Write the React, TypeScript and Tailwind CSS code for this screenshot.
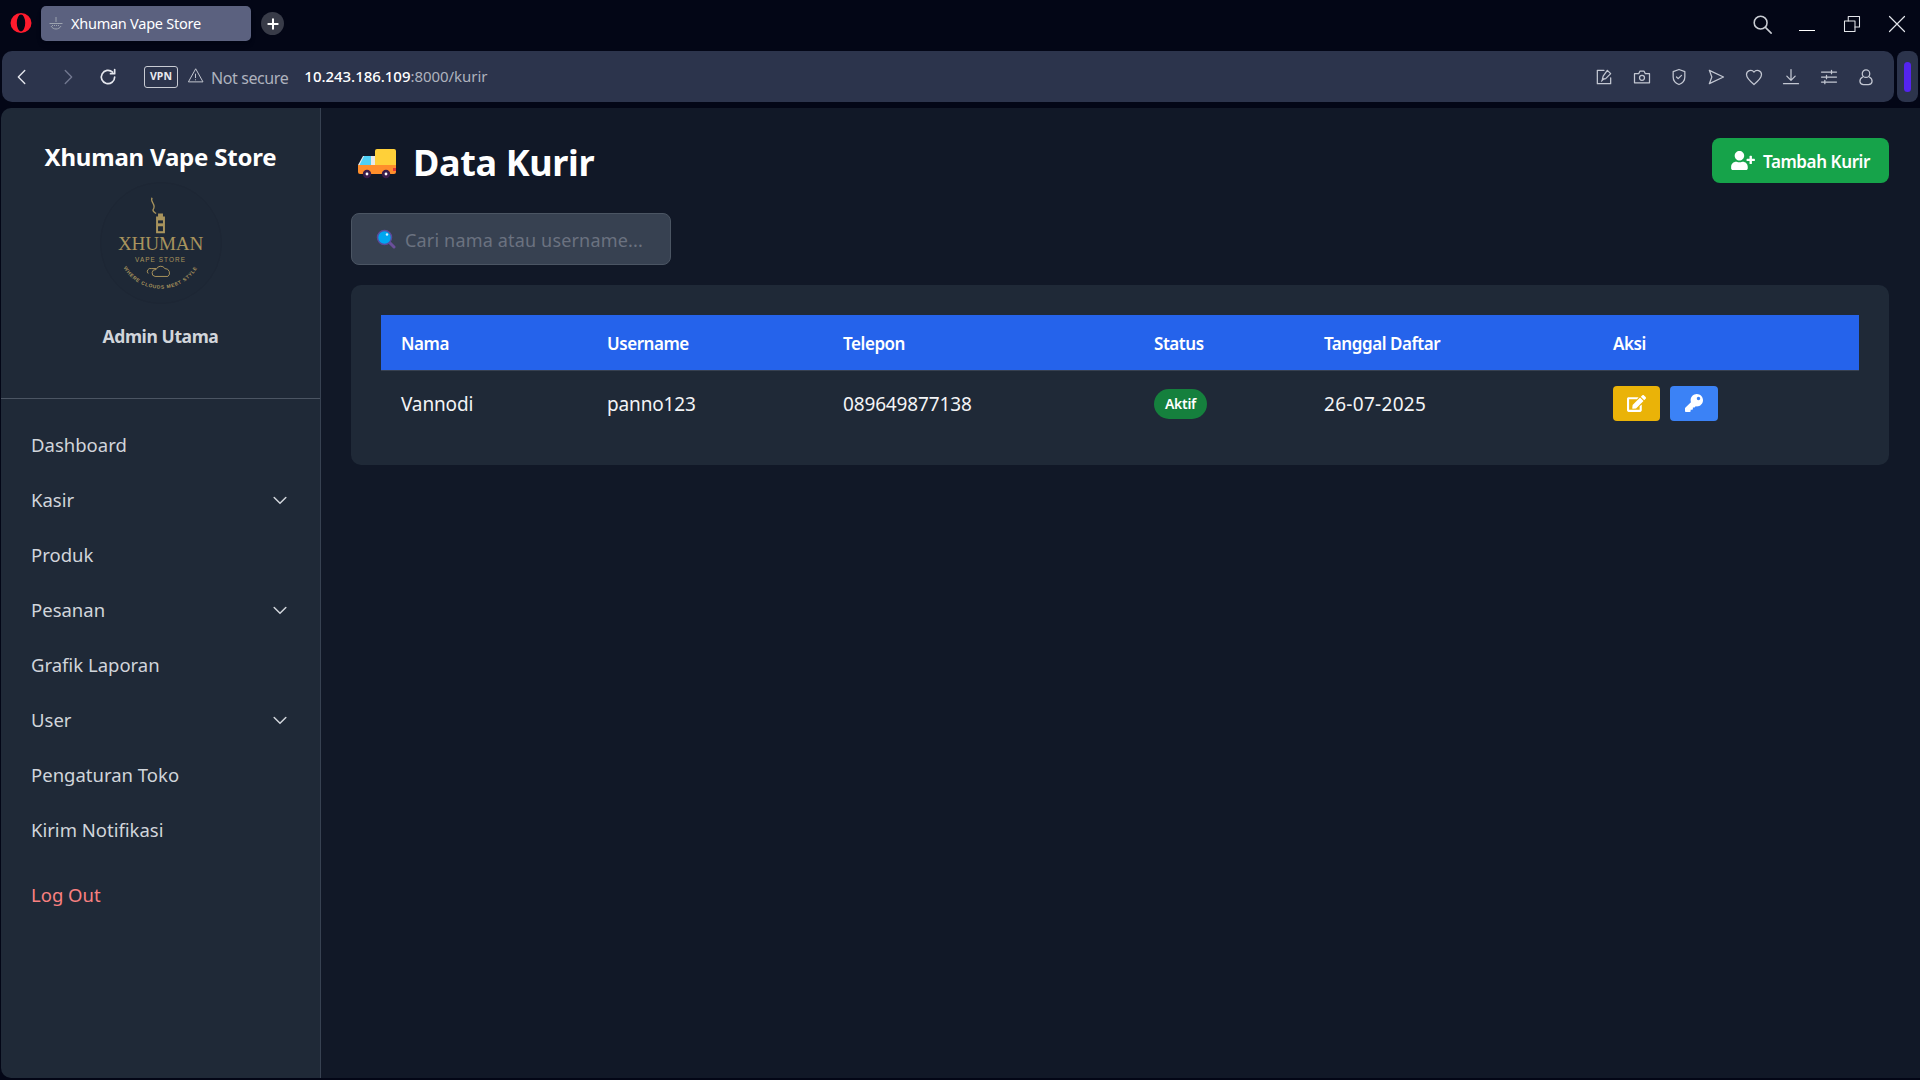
import { FaEdit, FaKey, FaUserPlus } from "react-icons/fa";

const ui = { fontFamily: '"Noto Sans", "Open Sans", sans-serif' };

function Stroke({ children, className = "w-5 h-5", vb = "0 0 24 24", sw = 1.5 }: { children: React.ReactNode; className?: string; vb?: string; sw?: number }) {
  return (
    <svg viewBox={vb} className={className} fill="none" stroke="currentColor" strokeWidth={sw} strokeLinecap="round" strokeLinejoin="round">
      {children}
    </svg>
  );
}

function Opera() {
  return (
    <svg viewBox="0 0 22 22" className="w-[22px] h-[22px]">
      <path
        fillRule="evenodd"
        fill="#ff1b2d"
        d="M11 1a10.500 10 0 1 0 0 20 10.500 10 0 1 0 0-20zM11 2.500a4.200 8.500 0 1 1 0 17 4.200 8.500 0 1 1 0-17z"
      />
    </svg>
  );
}

function TabIcon() {
  return (
    <svg viewBox="0 0 16 16" className="w-[16px] h-[16px]" stroke="#9ca3af" fill="none" strokeWidth="1">
      <path d="M8 1v5M1.500 7.500h13" />
      <path d="M3 10c2 4 8 4 10 0" />
      <path d="M4 9.500h8" strokeDasharray="1 1" />
    </svg>
  );
}

function Toolbar() {
  const cls = "w-[20px] h-[20px]";
  return (
    <div className="flex items-center gap-[17.4px] text-[#c3c7d2] pr-[18px]">
      <Stroke className={cls}><path d="M12 4H4v16h16v-7" /><path d="M16 4l4 4-6 6-4 1 1-4z" /><path d="M9 17l3-3" /></Stroke>
      <Stroke className={cls}><path d="M3 8h5l1.500-3h5L16 8h5v11H3z" /><circle cx="12" cy="13" r="3" /></Stroke>
      <Stroke className={cls}><path d="M12 3l7 2.500V12c0 4.500-3 7.500-7 9-4-1.500-7-4.500-7-9V5.500z" /><path d="M9 12l2 2 4-4" /></Stroke>
      <Stroke className={cls}><path d="M4 4l17 8-17 8 3-8z" /></Stroke>
      <Stroke className={cls}><path d="M12 21C6 16 3 13 3 9a5 5 0 0 1 9-3 5 5 0 0 1 9 3c0 4-3 7-9 12z" /></Stroke>
      <Stroke className={cls}><path d="M12 3v12M7 11l5 5 5-5M3 20h18" /></Stroke>
      <Stroke className={cls}><path d="M3 6h18M3 12h18M3 18h18" /><path d="M15 4v4M9 10v4M7 16v4" /></Stroke>
      <Stroke className={cls}><circle cx="12" cy="8" r="4.500" /><path d="M8 12c-5 3-4 9 1 9h6c5 0 6-6 1-9" /></Stroke>
    </div>
  );
}

function TopChrome() {
  return (
    <div className="bg-[#030616] h-[108px] shrink-0 flex flex-col">
      <div className="h-[51px] flex items-start">
        <div className="w-[41px] h-[44px] mt-[1px] flex items-center justify-center pl-[1px]"><Opera /></div>
        <div className="mt-[6px] w-[210px] h-[35px] rounded-[5px] bg-[#5b617f] flex items-center pl-[7px] gap-[5px] text-white text-[14.5px] tracking-[-0.25px] shadow-md">
          <TabIcon />
          <span className="ml-[2px]">Xhuman Vape Store</span>
        </div>
        <div className="ml-[10px] mt-[12px] w-[23px] h-[23px] rounded-full bg-[#383b48] flex items-center justify-center text-white">
          <Stroke className="w-[14px] h-[14px]" sw={3.500}><path d="M12 4v16M4 12h16" /></Stroke>
        </div>
        <div className="flex-1" />
        <div className="flex items-center h-[48px] text-[#e3e5ea]">
          <Stroke className="w-[22px] h-[22px] text-[#c9ccd3]" sw={1.700}><circle cx="10.500" cy="10.500" r="7" /><path d="M16 16l6 6" /></Stroke>
          <div className="w-[16px] h-[1px] bg-white ml-[26px] mt-[13px]" />
          <Stroke className="w-[18px] h-[18px] ml-[28px]" sw={1.400}><rect x="2" y="8" width="14" height="14" /><path d="M7 8V2h15v14h-6" /></Stroke>
          <Stroke className="w-[18px] h-[18px] ml-[27px] mr-[14px]" sw={1.600}><path d="M2 2l20 20M22 2L2 22" /></Stroke>
        </div>
      </div>
      <div className="flex h-[51px] pl-[2px] pr-[2px] gap-[3px]">
        <div className="flex-1 rounded-[10px] bg-[#2c344c] flex items-center justify-between">
          <div className="flex items-center text-white">
            <Stroke className="w-[22px] h-[22px] ml-[9px] text-[#e5e7ee]"><path d="M15 5l-7 7 7 7" /></Stroke>
            <Stroke className="w-[22px] h-[22px] ml-[24px] text-[#727890]"><path d="M9 5l7 7-7 7" /></Stroke>
            <Stroke className="w-[20px] h-[20px] ml-[19px] text-[#e5e7ee]" sw={2}><path d="M20 12a8 8 0 1 1-2.500-5.800" /><path d="M20 3v5h-5" /></Stroke>
            <div className="ml-[26px] w-[34px] h-[22px] rounded-[3px] border border-[#c8cbd3] flex items-center justify-center text-[10.5px] font-bold text-[#e8eaef]">VPN</div>
            <Stroke className="w-[17px] h-[17px] ml-[9px] -mt-[2px] text-[#c4c7d0]" sw={1.400}><path d="M12 3L2 21h20z" /><path d="M12 10v5M12 18v.2" /></Stroke>
            <span className="ml-[7px] text-[#aeb2be] text-[16px] tracking-[-0.4px] mt-[2px]">Not secure</span>
            <span className="ml-[16px] text-[15px] tracking-[-0.04px] font-medium -mt-[1px]">10.243.186.109<span className="text-[#aeb2be] font-normal">:8000/kurir</span></span>
          </div>
          <Toolbar />
        </div>
        <div className="w-[21px] rounded-[8px] bg-[#2c344c] flex items-center justify-center">
          <div className="w-[7px] h-[30px] rounded-full bg-[#5424f0]" />
        </div>
      </div>
    </div>
  );
}

function Logo() {
  const gold = "#a9945d";
  return (
    <div className="w-[122px] h-[122px] rounded-full bg-[#1e2836] border border-[#1d2634] flex items-center justify-center">
      <svg viewBox="0 0 122 122" className="w-[120px] h-[120px]">
        <path d="M52 15c-3 4 5 7 1 12 -1 2 2 3 3 4" fill="none" stroke={gold} strokeWidth="1.300" />
        <path d="M58 31h5v3h2v17h-9V34h2z" fill={gold} />
        <rect x="58" y="38" width="5" height="3" fill="#1f2937" />
        <rect x="58" y="44" width="5" height="5" fill="#1f2937" />
        <text x="60.500" y="68" textAnchor="middle" fill={gold} fontFamily="Liberation Serif, serif" fontSize="19.5" letterSpacing="-0.2">XHUMAN</text>
        <text x="60.500" y="80" textAnchor="middle" fill={gold} fontFamily="Liberation Sans, sans-serif" fontSize="6.500" letterSpacing="1.100">VAPE STORE</text>
        <path d="M55 95a3.500 3.500 0 0 1 1-7 5 5 0 0 1 9-1 4.500 4.500 0 0 1 3 8zM48 92a3 3 0 0 1 3-5h5" fill="none" stroke={gold} strokeWidth="1" />
        <defs><path id="logoArc" d="M19 78A44 44 0 0 0 102 78" /></defs>
        <text fill={gold} fontFamily="Liberation Sans, sans-serif" fontSize="5" fontWeight="700" letterSpacing="0.7">
          <textPath href="#logoArc" startOffset="50%" textAnchor="middle">WHERE CLOUDS MEET STYLE</textPath>
        </text>
      </svg>
    </div>
  );
}

function Chevron() {
  return (
    <Stroke className="w-[20px] h-[20px] text-[#d1d5db]" sw={1.800}><path d="M5 9l7 7 7-7" /></Stroke>
  );
}

function NavItem({ label, chevron }: { label: string; chevron?: boolean }) {
  return (
    <div className="h-[55px] flex items-center justify-between pl-[30px] pr-[30px] text-[#d1d5db] text-[18.5px]">
      <span>{label}</span>
      {chevron && <Chevron />}
    </div>
  );
}

function Sidebar() {
  return (
    <aside className="w-[320px] shrink-0 bg-[#1f2937] border-r border-[#374151] rounded-tl-[10px] rounded-bl-[10px] ml-[1px] flex flex-col">
      <div className="h-[291px] border-b border-[#4b5563] flex flex-col items-center pt-[29px]">
        <h1 className="text-white text-[24px] font-bold leading-[40px] tracking-[-0.2px]">Xhuman Vape Store</h1>
        <div className="mt-[5px]"><Logo /></div>
        <p className="mt-[18px] text-[#d1d5db] text-[17.5px] font-bold tracking-[-0.4px] leading-[28px]">Admin Utama</p>
      </div>
      <nav className="pt-[18px] flex flex-col">
        <NavItem label="Dashboard" />
        <NavItem label="Kasir" chevron />
        <NavItem label="Produk" />
        <NavItem label="Pesanan" chevron />
        <NavItem label="Grafik Laporan" />
        <NavItem label="User" chevron />
        <NavItem label="Pengaturan Toko" />
        <NavItem label="Kirim Notifikasi" />
        <div className="pl-[30px] mt-[16px] h-[44px] flex items-center text-[#f98080] text-[18.5px]">Log Out</div>
      </nav>
    </aside>
  );
}

function Truck() {
  return (
    <svg viewBox="0 0 40 32" className="w-[40px] h-[32px]">
      <rect x="18" y="2" width="21" height="19" rx="2" fill="#ffd039" />
      <path d="M6 9h12v12H1v-3z" fill="#e8e8e8" />
      <path d="M7 9h7v9H2.500z" fill="#4fd0f5" />
      <path d="M1 18h38v7a2 2 0 0 1-2 2H3a2 2 0 0 1-2-2z" fill="#ff8e2b" />
      <rect x="36" y="21" width="3" height="3" fill="#e53935" />
      <circle cx="10" cy="27" r="4.200" fill="#3b1d4a" /><circle cx="10" cy="27" r="1.400" fill="#fff" />
      <circle cx="29" cy="27" r="4.200" fill="#3b1d4a" /><circle cx="29" cy="27" r="1.400" fill="#fff" />
    </svg>
  );
}

function Magnifier() {
  return (
    <svg viewBox="0 0 20 20" className="w-[20px] h-[20px] shrink-0">
      <path d="M12 12l6 6" stroke="#6b4f9a" strokeWidth="3" strokeLinecap="round" />
      <circle cx="8.500" cy="8.500" r="7" fill="#00a6f0" stroke="#5b4a9c" strokeWidth="1.500" />
      <circle cx="11" cy="5.500" r="1.200" fill="#d8f4ff" />
    </svg>
  );
}

function Main() {
  const th = "text-left font-semibold text-white text-[17px] tracking-[-0.45px] pl-[20px] pt-[2px]";
  const td = "pl-[20px] pt-[2px] text-[#f3f4f6] text-[19px] tracking-[-0.15px]";
  return (
    <main className="flex-1 bg-[#111827] pl-[30px] pr-[31px] pt-[30px]">
      <div className="flex items-center justify-between h-[45px]">
        <div className="flex items-center pl-[6px] gap-[16px] pt-[4px]">
          <Truck />
          <h2 className="text-white text-[36px] font-bold leading-[40px] tracking-[-0.35px]">Data Kurir</h2>
        </div>
        <button className="w-[177px] h-[45px] rounded-[8px] bg-[#16a34a] text-white flex items-center justify-center gap-[8px] text-[17px] font-semibold tracking-[-0.4px]">
          <FaUserPlus className="w-[24px] h-[19px]" />
          <span className="pt-[2px]">Tambah Kurir</span>
        </button>
      </div>
      <div className="mt-[30px] w-[320px] h-[52px] rounded-[8px] bg-[#374151] border border-[#4b5563] flex items-center pl-[24px] gap-[9px]">
        <Magnifier />
        <span className="text-[#6b7280] text-[18px] tracking-[0.17px] pt-[2px]">Cari nama atau username...</span>
      </div>
      <div className="mt-[20px] rounded-[10px] bg-[#1f2937] p-[30px]">
        <table className="w-full border-collapse table-fixed">
          <colgroup>
            <col className="w-[206px]" />
            <col className="w-[236px]" />
            <col className="w-[311px]" />
            <col className="w-[170px]" />
            <col className="w-[289px]" />
            <col />
          </colgroup>
          <thead>
            <tr className="bg-[#2563eb] h-[55px] border-b border-[#374151]">
              <th className={th}>Nama</th>
              <th className={th}>Username</th>
              <th className={th}>Telepon</th>
              <th className={th}>Status</th>
              <th className={th}>Tanggal Daftar</th>
              <th className={th}>Aksi</th>
            </tr>
          </thead>
          <tbody>
            <tr className="h-[65px]">
              <td className={td}>Vannodi</td>
              <td className={td}>panno123</td>
              <td className={td}>089649877138</td>
              <td className="pl-[20px] pt-[2px]">
                <span className="inline-flex items-center justify-center w-[53px] h-[30px] rounded-full bg-[#15803d] text-white text-[14px] font-semibold tracking-[-0.3px]">Aktif</span>
              </td>
              <td className={`${td} tracking-[0.3px]`}>26-07-2025</td>
              <td className="pl-[20px] pt-[2px]">
                <div className="flex gap-[10px] -mt-[1px]">
                  <button className="w-[47px] h-[35px] rounded-[4px] bg-[#eab308] text-white flex items-center justify-center"><FaEdit className="w-[19px] h-[17px]" /></button>
                  <button className="w-[48px] h-[35px] rounded-[4px] bg-[#3b82f6] text-white flex items-center justify-center"><FaKey className="w-[18px] h-[18px]" /></button>
                </div>
              </td>
            </tr>
          </tbody>
        </table>
      </div>
    </main>
  );
}

export default function App() {
  return (
    <div style={ui} className="w-[1920px] h-[1080px] bg-[#030616] flex flex-col overflow-hidden">
      <TopChrome />
      <div className="h-[970px] flex">
        <Sidebar />
        <Main />
      </div>
    </div>
  );
}
